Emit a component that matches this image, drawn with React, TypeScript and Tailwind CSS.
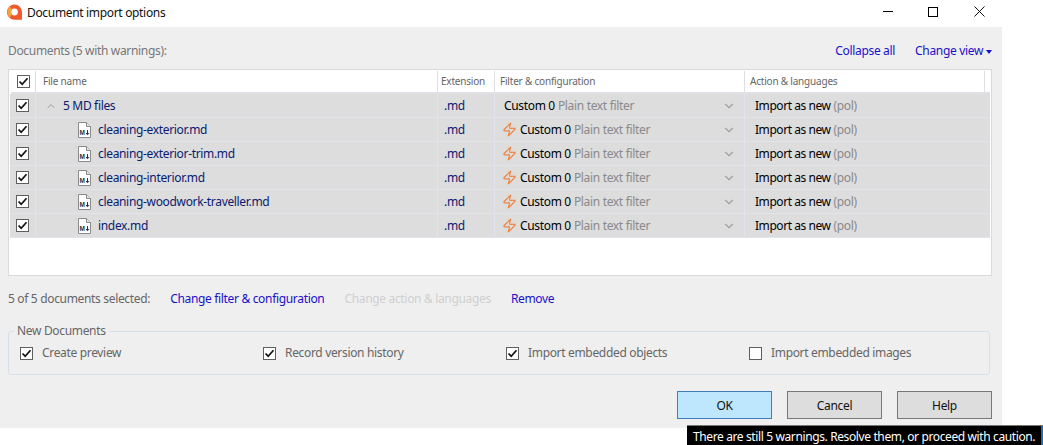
import { ChevronDown, ChevronUp, Zap } from 'lucide-react';

const files = [
  'cleaning-exterior.md',
  'cleaning-exterior-trim.md',
  'cleaning-interior.md',
  'cleaning-woodwork-traveller.md',
  'index.md',
];

function CheckBox({ checked = true }: { checked?: boolean }) {
  return (
    <span className="flex h-[13px] w-[13px] shrink-0 items-center justify-center border border-[#5f5f5f] bg-white">
      {checked && (
        <svg width="11" height="11" viewBox="0 0 11 11" fill="none">
          <path d="M1.5 5.5 L4.2 8.2 L9.5 2.2" stroke="#111" strokeWidth="1.7" />
        </svg>
      )}
    </span>
  );
}

function FileIcon() {
  return (
    <svg width="13" height="16" viewBox="0 0 13 16" fill="none" className="shrink-0">
      <path d="M0.5 0.5 H8.5 L12.5 4.5 V15.5 H0.5 Z" fill="#fff" stroke="#8a8a8a" />
      <path d="M8.5 0.5 V4.5 H12.5" fill="#e4e4e4" stroke="#8a8a8a" />
      <text x="1.6" y="13" fontSize="6.5" fontWeight="700" fill="#333" fontFamily="Liberation Sans, sans-serif">
        M
      </text>
      <path d="M9.5 8 V12.5 M8 11 L9.5 12.8 L11 11" stroke="#333" strokeWidth="1" />
    </svg>
  );
}

function Logo() {
  return (
    <svg width="17" height="17" viewBox="0 0 17 17">
      <path d="M8.5 0.5 A7.6 7.6 0 1 0 8.5 15.7 H16 V8.1 A7.6 7.6 0 0 0 8.5 0.5 Z" fill="#f0592b" />
      <circle cx="8.5" cy="8" r="3.4" fill="#fff" />
      <path d="M4 2.5 A7 7 0 0 0 4 13.5 L6 10.5 A4 4 0 0 1 6 5.5 Z" fill="#f7a23b" />
    </svg>
  );
}

function Row({ name, group }: { name: string; group?: boolean }) {
  return (
    <div className="grid h-6 grid-cols-[26px_401px_57px_250px_246px] border-b border-[#e3e3ee] bg-[#dddddd]">
      <div className="flex items-center justify-center border-r border-[#e3e3ee]">
        <CheckBox />
      </div>
      {group ? (
        <div className="flex items-center pl-[9px] text-[#0a1a6e]">
          <ChevronUp size={12} className="mr-[6px] text-[#9a9a9a]" />
          {name}
        </div>
      ) : (
        <div className="flex items-center pl-[42px] text-[#0a1a6e]">
          <FileIcon />
          <span className="ml-[7px]">{name}</span>
        </div>
      )}
      <div className="flex items-center border-l border-[#e3e3ee] pl-[6px] text-[#0a1a6e]">.md</div>
      <div className="flex items-center border-l border-[#e3e3ee] pl-[9px] pr-[8px]">
        {!group && <Zap size={15} strokeWidth={2} className="mr-[3px] -ml-[2px] text-[#ee8748]" />}
        <span className="text-black">Custom 0</span>
        <span className="ml-[3px] text-[#8a8a8a]">Plain text filter</span>
        <ChevronDown size={14} className="ml-auto text-[#a0a0a0]" />
      </div>
      <div className="flex items-center border-l border-[#e3e3ee] pl-[10px]">
        <span className="tracking-[-0.45px] text-black">Import as new</span>
        <span className="ml-[3px] text-[#8a8a8a]">(pol)</span>
      </div>
    </div>
  );
}

function Button({ label, primary }: { label: string; primary?: boolean }) {
  return (
    <button
      className={
        primary
          ? 'h-7 w-[95px] border border-[#3f7fb5] bg-[#bee6fd] pt-px text-[#111]'
          : 'h-7 w-[95px] border border-[#777] bg-[#dddddd] pt-px text-[#111]'
      }
    >
      {label}
    </button>
  );
}

function Option({ label, checked = true }: { label: string; checked?: boolean }) {
  return (
    <div className="flex items-center gap-[9px] text-[#666]">
      <CheckBox checked={checked} />
      {label}
    </div>
  );
}

export default function App() {
  return (
    <div className="relative h-[445px] w-[1043px] overflow-hidden bg-white font-['Noto_Sans','Open_Sans',sans-serif] text-[12px] tracking-[-0.33px]">
      <div className="h-[428px] w-[1002px] bg-[#efefef]">
        <header className="flex h-[27px] items-center bg-white pb-[2px] pl-[6px]">
          <Logo />
          <span className="ml-[4px] text-[#111]">Document import options</span>
          <div className="ml-auto flex items-center pb-[2px] text-black">
            <span className="h-px w-[10px] bg-black" />
            <span className="ml-[35px] h-[10px] w-[10px] border border-black" />
            <svg width="11" height="11" viewBox="0 0 11 11" className="ml-[36px] mr-[17px]">
              <path d="M0.5 0.5 L10.5 10.5 M10.5 0.5 L0.5 10.5" stroke="#111" strokeWidth="1" />
            </svg>
          </div>
        </header>

        <div className="flex h-[42px] items-center justify-between pl-2 pr-[10px] pt-[6px]">
          <span className="text-[#777]">Documents (5 with warnings):</span>
          <div className="flex items-center text-[#1a10cc]">
            <span>Collapse all</span>
            <span className="ml-[20px]">Change view</span>
            <span className="ml-[3px] mt-px border-x-[3px] border-t-[4px] border-x-transparent border-t-[#1a10cc]" />
          </div>
        </div>

        <div className="mx-2 h-[207px] w-[984px] border border-[#d9d9d9] bg-white px-px pt-px">
          <div className="ml-px grid h-[23px] grid-cols-[25px_401px_57px_250px_241px] border-b-2 border-[#dfdfe6] text-[10px] tracking-[-0.2px] text-[#666]">
            <div className="flex items-center justify-center border-r border-[#dfdfdf]">
              <CheckBox />
            </div>
            <div className="flex items-center pl-[7px]">File name</div>
            <div className="flex items-center border-l border-[#dfdfdf] pl-[3px]">Extension</div>
            <div className="flex items-center border-l border-[#dfdfdf] pl-[5px]">Filter &amp; configuration</div>
            <div className="flex items-center border-x border-[#dfdfdf] pl-[5px]">Action &amp; languages</div>
          </div>
          <Row name="5 MD files" group />
          {files.map((f) => (
            <Row key={f} name={f} />
          ))}
        </div>

        <div className="flex h-[45px] items-center pl-2 pt-[1px]">
          <span className="text-[#666]">5 of 5 documents selected:</span>
          <span className="ml-[20px] text-[#1a10cc]">Change filter &amp; configuration</span>
          <span className="ml-[20px] text-[#cfcfcf]">Change action &amp; languages</span>
          <span className="ml-[20px] text-[#1a10cc]">Remove</span>
        </div>

        <fieldset className="mx-2 mt-[4px] h-[50px] w-[982px] rounded-[3px] border border-[#d5e0ea] px-[11px]">
          <legend className="ml-[-6px] px-[3px] leading-[12px] text-[#666]">New Documents</legend>
          <div className="mt-[7px] grid grid-cols-[243px_243px_243px_1fr]">
            <Option label="Create preview" />
            <Option label="Record version history" />
            <Option label="Import embedded objects" />
            <Option label="Import embedded images" checked={false} />
          </div>
        </fieldset>

        <div className="mt-[16px] flex justify-end gap-[15px] pr-[10px]">
          <Button label="OK" primary />
          <Button label="Cancel" />
          <Button label="Help" />
        </div>
      </div>

      <div className="absolute bottom-0 left-[687px] flex h-[20px] w-[356px] items-center whitespace-nowrap border-t border-[#777] bg-black pl-[6px] pt-[3px] tracking-[-0.38px] text-white">
        There are still 5 warnings. Resolve them, or proceed with caution.
        <span className="absolute right-0 top-0 h-full w-[2px] bg-[#1a6fb5]" />
      </div>
    </div>
  );
}
